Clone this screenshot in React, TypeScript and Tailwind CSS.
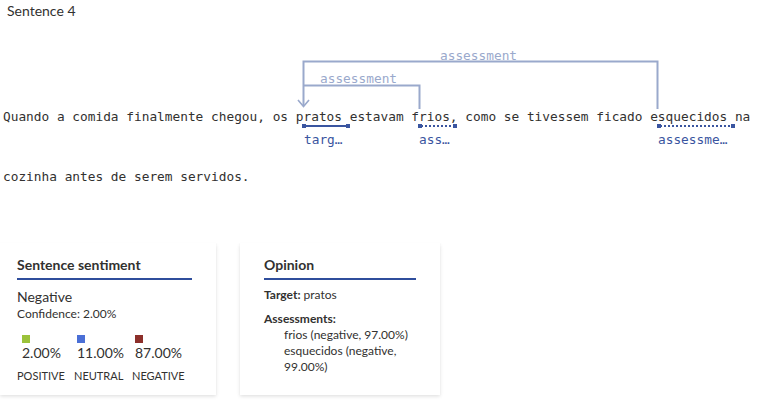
import React from "react";

const mono = { fontFamily: '"DejaVu Sans Mono", "Liberation Mono", monospace' };
const ui = { fontFamily: 'Lato, "Open Sans", sans-serif' };

function Diagram() {
  const light = "#9aa9cc";
  const dark = "#3a55a0";
  return (
    <svg className="absolute left-0 top-0 pointer-events-none" width="763" height="160" viewBox="0 0 763 160">
      <polyline points="303.5,106 303.5,61.5 657.5,61.5 657.5,109" fill="none" stroke={light} strokeWidth="2" />
      <polyline points="303.5,85.5 419.5,85.5 419.5,109" fill="none" stroke={light} strokeWidth="2" />
      <polyline points="298,100 303.5,106.5 309,100" fill="none" stroke={light} strokeWidth="1.6" />
      <text x="440" y="60" fill={light} fontSize="12.8" style={mono}>assessment</text>
      <text x="320" y="83" fill={light} fontSize="12.8" style={mono}>assessment</text>
      <line x1="304" y1="126" x2="348" y2="126" stroke={dark} strokeWidth="2" />
      <rect x="302" y="124" width="4" height="4" fill={dark} />
      <rect x="346" y="124" width="4" height="4" fill={dark} />
      <line x1="421" y1="126" x2="454" y2="126" stroke={dark} strokeWidth="2" strokeDasharray="2 2" />
      <rect x="418" y="124" width="4" height="4" fill={dark} />
      <rect x="453" y="124" width="4" height="4" fill={dark} />
      <line x1="660" y1="126" x2="732" y2="126" stroke={dark} strokeWidth="2" strokeDasharray="2 2" />
      <rect x="657" y="124" width="4" height="4" fill={dark} />
      <rect x="731" y="124" width="4" height="4" fill={dark} />
      <text x="304" y="144" fill={dark} fontSize="12.8" style={mono}>targ…</text>
      <text x="419" y="144" fill={dark} fontSize="12.8" style={mono}>ass…</text>
      <text x="658" y="144" fill={dark} fontSize="12.8" style={mono}>assessme…</text>
    </svg>
  );
}

export default function App() {
  return (
    <div className="w-[763px] h-[401px] bg-white overflow-hidden text-[#323130]">
      <div className="relative">
        <Diagram />
        <div className="pl-[7px] pt-[2px] text-[14px] leading-[18px]" style={ui}>Sentence 4</div>
        <div className="pl-[3px] pt-[89px] text-[12.8px] leading-[16px] text-[#323130] whitespace-pre" style={mono}>
          Quando a comida finalmente chegou, os pratos estavam frios, como se tivessem ficado esquecidos na
        </div>
        <div className="pl-[3px] pt-[44px] text-[12.8px] leading-[16px] text-[#323130] whitespace-pre" style={mono}>
          cozinha antes de serem servidos.
        </div>
      </div>
      <div className="flex gap-[24px] mt-[58px] items-stretch" style={ui}>
        <div className="w-[216px] h-[152px] bg-white shadow-[0_1.6px_3.6px_rgba(0,0,0,0.13),0_0.3px_0.9px_rgba(0,0,0,0.11)] pl-[17px] pr-[24px] pt-[13px]">
          <div className="text-[14px] font-bold leading-[18px] pb-[4px] border-b-2 border-[#2f4e9c]">Sentence sentiment</div>
          <div className="mt-[8px] text-[14px] leading-[18px]">Negative</div>
          <div className="text-[12px] leading-[16px]">Confidence: 2.00%</div>
          <div className="mt-[13px] flex">
            <div className="w-[57px] pl-[5px]">
              <div className="w-[8px] h-[8px] bg-[#9bc23a]" />
              <div className="text-[14px] leading-[18px] mt-[1px]">2.00%</div>
            </div>
            <div className="w-[59px] pl-[3px]">
              <div className="w-[8px] h-[8px] bg-[#4a6fd6]" />
              <div className="text-[14px] leading-[18px] mt-[1px]">11.00%</div>
            </div>
            <div className="pl-[2px]">
              <div className="w-[8px] h-[8px] bg-[#8c2f2a]" />
              <div className="text-[14px] leading-[18px] mt-[1px]">87.00%</div>
            </div>
          </div>
          <div className="flex mt-[6px] text-[11px] leading-[16px]">
            <div className="w-[57px]">POSITIVE</div>
            <div className="w-[58px]">NEUTRAL</div>
            <div>NEGATIVE</div>
          </div>
        </div>
        <div className="w-[200px] h-[152px] bg-white shadow-[0_1.6px_3.6px_rgba(0,0,0,0.13),0_0.3px_0.9px_rgba(0,0,0,0.11)] px-[24px] pt-[13px]">
          <div className="text-[14px] font-bold leading-[18px] pb-[4px] border-b-2 border-[#2f4e9c]">Opinion</div>
          <div className="mt-[7px] text-[12px] leading-[16px]"><span className="font-bold">Target:</span> pratos</div>
          <div className="mt-[8px] text-[12px] leading-[16px] font-bold">Assessments:</div>
          <div className="pl-[20px] text-[12px] leading-[16px]">
            <div>frios (negative, 97.00%)</div>
            <div>esquecidos (negative, 99.00%)</div>
          </div>
        </div>
      </div>
    </div>
  );
}
